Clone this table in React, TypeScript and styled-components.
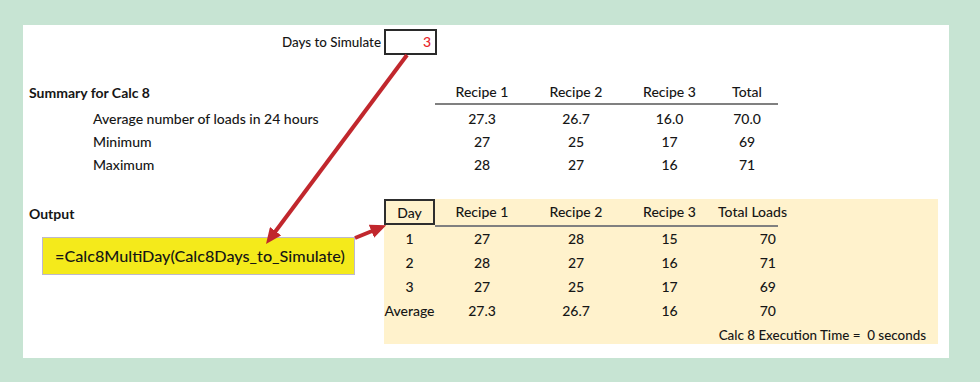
import styled, { createGlobalStyle } from 'styled-components';

const GlobalStyle = createGlobalStyle`
  html, body { margin: 0; padding: 0; }
  body {
    background: #c7e4d3;
    font-family: Lato, "Liberation Sans", sans-serif;
    color: #161616;
  }
`;

const Page = styled.div`
  position: relative;
  width: 980px;
  height: 382px;
  padding: 25px 31px 24px 23px;
  box-sizing: border-box;
`;

const Panel = styled.div`
  background: #fff;
  height: 100%;
  box-sizing: border-box;
  padding: 4px 0 0 6px;
  display: flex;
  flex-direction: column;
  font-size: 14px;
  font-weight: 500;
`;

const TopRow = styled.div`
  display: grid;
  grid-template-columns: 355px 53px;
  align-items: center;
  height: 26px;
`;

const InputLabel = styled.div`
  text-align: right;
  padding-right: 3px;
  font-size: 13.4px;
`;

const InputBox = styled.div`
  height: 26px;
  box-sizing: border-box;
  border: 2px solid #2a2a2a;
  color: #e8262b;
  text-align: right;
  padding-right: 4px;
  line-height: 22px;
`;

const SummaryGrid = styled.div`
  margin-top: 27px;
  display: grid;
  grid-template-columns: 406px 94px 94px 93px 62px;
  grid-template-rows: 25px repeat(3, 23px);
`;

const BoldLabel = styled.div`
  font-weight: 700;
  line-height: 21px;
`;

const HeadCell = styled.div<{ $align?: 'left' | 'center' }>`
  height: 21px;
  line-height: 19px;
  border-bottom: 2px solid #808080;
  text-align: ${(p) => p.$align ?? 'center'};
  white-space: nowrap;
  align-self: start;
`;

const RowLabel = styled.div`
  padding-left: 64px;
  line-height: 23px;
`;

const Num = styled.div<{ $right?: boolean }>`
  line-height: 23px;
  text-align: ${(p) => (p.$right ? 'right' : 'center')};
  padding-right: ${(p) => (p.$right ? '2px' : '0')};
  white-space: nowrap;
`;

const OutputSection = styled.div`
  margin-top: 23px;
  display: flex;
`;

const OutputLeft = styled.div`
  width: 355px;
  display: flex;
  flex-direction: column;
`;

const OutputLabel = styled(BoldLabel)`
  line-height: 26px;
  padding-top: 2px;
`;

const FormulaBox = styled.div`
  margin: 10px 0 0 13px;
  width: 313px;
  height: 38px;
  box-sizing: border-box;
  background: #f4ea1b;
  border: 1px solid #bdb8cc;
  padding-left: 12px;
  font-size: 16.2px;
  line-height: 36px;
  white-space: nowrap;
`;

const OutputTable = styled.div`
  width: 554px;
  height: 145px;
  background: #fff2cc;
  display: grid;
  grid-template-columns: 51px 94px 94px 93px 62px 160px;
  grid-template-rows: 28px repeat(4, 24px) 21px;
`;

const DayHead = styled.div`
  height: 26px;
  box-sizing: border-box;
  border: 2px solid #2e2e2e;
  text-align: center;
  line-height: 23px;
`;

const OutHead = styled(HeadCell)`
  height: 26px;
  line-height: 25px;
  padding-left: ${(p) => (p.$align === 'left' ? '2px' : '0')};
`;

const OutCell = styled(Num)`
  line-height: 24px;
`;

const ExecTime = styled.div`
  grid-column: 5 / 7;
  text-align: right;
  padding-right: 12px;
  line-height: 21px;
  padding-top: 2px;
  white-space: nowrap;
  font-size: 13.4px;
`;

const Arrows = styled.svg`
  position: absolute;
  left: 0;
  top: 0;
  pointer-events: none;
`;

const summaryRows = [
  { label: 'Average number of loads in 24 hours', v: ['27.3', '26.7', '16.0', '70.0'] },
  { label: 'Minimum', v: ['27', '25', '17', '69'] },
  { label: 'Maximum', v: ['28', '27', '16', '71'] },
];

const outputRows = [
  ['1', '27', '28', '15', '70'],
  ['2', '28', '27', '16', '71'],
  ['3', '27', '25', '17', '69'],
  ['Average', '27.3', '26.7', '16', '70'],
];

const recipes = ['Recipe 1', 'Recipe 2', 'Recipe 3'];

export default function App() {
  return (
    <>
      <GlobalStyle />
      <Page>
        <Panel>
          <TopRow>
            <InputLabel>Days to Simulate</InputLabel>
            <InputBox>3</InputBox>
          </TopRow>

          <SummaryGrid>
            <BoldLabel>Summary for Calc 8</BoldLabel>
            {recipes.map((r) => (
              <HeadCell key={r}>{r}</HeadCell>
            ))}
            <HeadCell>Total</HeadCell>
            {summaryRows.map((row) => (
              <>
                <RowLabel key={row.label}>{row.label}</RowLabel>
                {row.v.map((v, i) => (
                  <Num key={row.label + i}>{v}</Num>
                ))}
              </>
            ))}
          </SummaryGrid>

          <OutputSection>
            <OutputLeft>
              <OutputLabel>Output</OutputLabel>
              <FormulaBox>=Calc8MultiDay(Calc8Days_to_Simulate)</FormulaBox>
            </OutputLeft>
            <OutputTable>
              <DayHead>Day</DayHead>
              {recipes.map((r) => (
                <OutHead key={r}>{r}</OutHead>
              ))}
              <OutHead $align="left">Total Loads</OutHead>
              <div />
              {outputRows.map((row) => (
                <>
                  {row.map((v, i) => (
                    <OutCell key={row[0] + i} $right={i === 4}>
                      {v}
                    </OutCell>
                  ))}
                  <div />
                </>
              ))}
              <ExecTime>Calc 8 Execution Time =&nbsp; 0 seconds</ExecTime>
            </OutputTable>
          </OutputSection>
        </Panel>

        <Arrows width="980" height="382" viewBox="0 0 980 382">
          <defs>
            <marker
              id="head"
              markerUnits="userSpaceOnUse"
              markerWidth="16"
              markerHeight="14"
              refX="6"
              refY="7"
              orient="auto"
            >
              <path d="M0,0 L16,7 L0,14 z" fill="#c1272d" />
            </marker>
          </defs>
          <line x1="407" y1="55" x2="272" y2="236" stroke="#c1272d" strokeWidth="4" markerEnd="url(#head)" />
          <line x1="355" y1="238" x2="377" y2="229" stroke="#c1272d" strokeWidth="4" markerEnd="url(#head)" />
        </Arrows>
      </Page>
    </>
  );
}
